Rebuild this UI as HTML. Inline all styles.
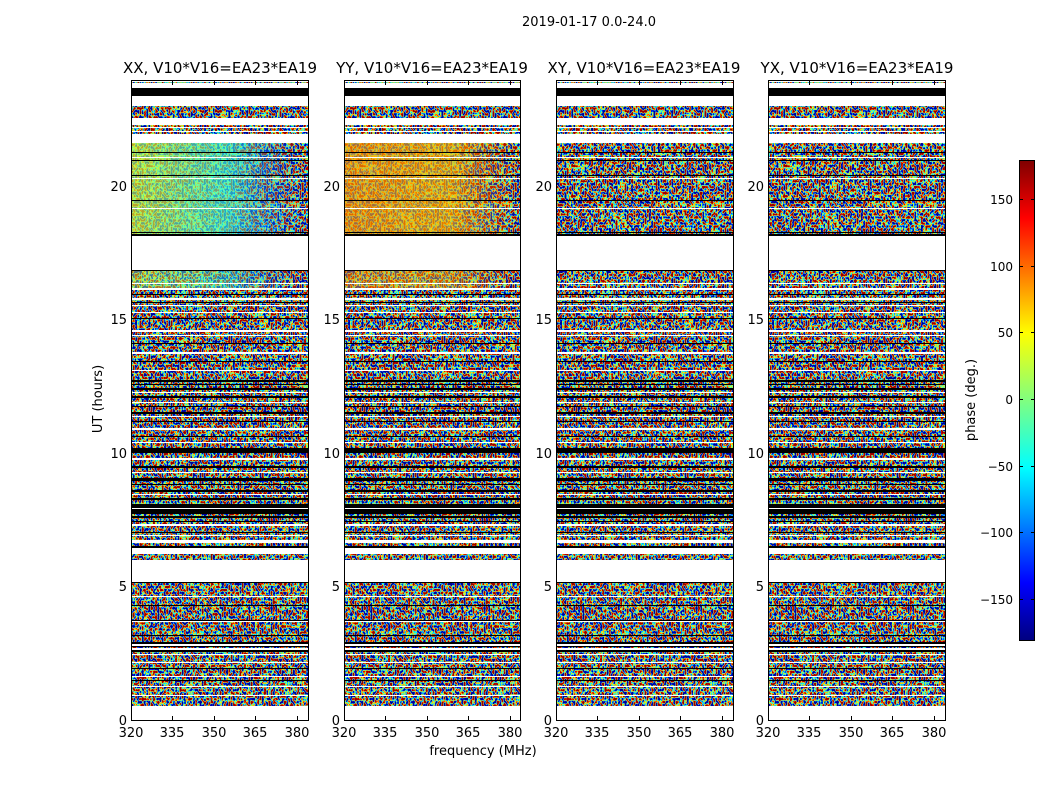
<!DOCTYPE html>
<html><head><meta charset="utf-8"><style>
html,body{margin:0;padding:0;background:#fff;width:1050px;height:800px;overflow:hidden}
svg text{font-family:"DejaVu Sans","Liberation Sans",sans-serif;fill:#000}
</style></head><body>
<svg width="1050" height="800" viewBox="0 0 1050 800" xmlns="http://www.w3.org/2000/svg">
<defs>
<filter id="nz" x="0" y="0" width="1" height="1" color-interpolation-filters="sRGB">
<feTurbulence type="fractalNoise" baseFrequency="0.45 0.33" numOctaves="1" seed="3"/>
<feColorMatrix type="matrix" values="4 0 0 0 -1.5  4 0 0 0 -1.5  4 0 0 0 -1.5  0 0 0 0 1"/>
<feComponentTransfer>
<feFuncR type="table" tableValues="0 0 0 0 0.5 1 1 1 0.6"/>
<feFuncG type="table" tableValues="0 0 0.5 1 1 1 0.5 0 0"/>
<feFuncB type="table" tableValues="0.6 1 1 1 0.5 0 0 0 0"/>
<feFuncA type="linear" slope="0" intercept="1"/>
</feComponentTransfer>
</filter>
<linearGradient id="jet" x1="0" y1="0" x2="0" y2="1">
<stop offset="0" stop-color="#800000"/>
<stop offset="0.12" stop-color="#ff0000"/>
<stop offset="0.36" stop-color="#ffff00"/>
<stop offset="0.5" stop-color="#80ff80"/>
<stop offset="0.64" stop-color="#00ffff"/>
<stop offset="0.88" stop-color="#0000ff"/>
<stop offset="1" stop-color="#00007f"/>
</linearGradient>
<linearGradient id="tintA" x1="0" y1="0" x2="1" y2="0">
<stop offset="0" stop-color="#c8ff40"/>
<stop offset="0.55" stop-color="#40ffd0"/>
<stop offset="1" stop-color="#2060ff" stop-opacity="0"/>
</linearGradient>
<linearGradient id="tintB" x1="0" y1="0" x2="1" y2="0">
<stop offset="0" stop-color="#ffa000"/>
<stop offset="0.6" stop-color="#ffc000"/>
<stop offset="1" stop-color="#ff8000" stop-opacity="0"/>
</linearGradient>
<g id="stripes">
<rect x="0" y="0" width="177" height="2" fill="#fff"/>
<rect x="0" y="3" width="177" height="6" fill="#fff"/>
<rect x="0" y="8" width="177" height="8" fill="#000"/>
<rect x="0" y="16" width="177" height="10" fill="#fff"/>
<rect x="0" y="38" width="177" height="7" fill="#fff"/>
<rect x="0" y="47" width="177" height="1" fill="#fff"/>
<rect x="0" y="51" width="177" height="1" fill="#fff"/>
<rect x="0" y="54" width="177" height="9" fill="#fff"/>
<rect x="0" y="72" width="177" height="1" fill="#000"/>
<rect x="0" y="77" width="177" height="1" fill="#fff"/>
<rect x="0" y="80" width="177" height="1" fill="#000"/>
<rect x="0" y="95" width="177" height="1" fill="#000"/>
<rect x="0" y="98" width="177" height="1" fill="#fff"/>
<rect x="0" y="120" width="177" height="1" fill="#000"/>
<rect x="0" y="128" width="177" height="1" fill="#fff"/>
<rect x="0" y="152" width="177" height="1" fill="#000"/>
<rect x="0" y="154" width="177" height="2" fill="#000"/>
<rect x="0" y="156" width="177" height="34" fill="#fff"/>
<rect x="0" y="190" width="177" height="1" fill="#000"/>
<rect x="0" y="203" width="177" height="1" fill="#fff"/>
<rect x="0" y="208" width="177" height="2" fill="#fff"/>
<rect x="0" y="214" width="177" height="1" fill="#000"/>
<rect x="0" y="218" width="177" height="2" fill="#fff"/>
<rect x="0" y="222" width="177" height="1" fill="#000"/>
<rect x="0" y="225" width="177" height="1" fill="#fff"/>
<rect x="0" y="232" width="177" height="1" fill="#fff"/>
<rect x="0" y="238" width="177" height="1" fill="#000"/>
<rect x="0" y="250" width="177" height="2" fill="#fff"/>
<rect x="0" y="255" width="177" height="1" fill="#fff"/>
<rect x="0" y="263" width="177" height="1" fill="#000"/>
<rect x="0" y="272" width="177" height="2" fill="#fff"/>
<rect x="0" y="281" width="177" height="1" fill="#000"/>
<rect x="0" y="290" width="177" height="1" fill="#fff"/>
<rect x="0" y="300" width="177" height="2" fill="#000"/>
<rect x="0" y="304" width="177" height="1" fill="#000"/>
<rect x="0" y="308" width="177" height="2" fill="#000"/>
<rect x="0" y="312" width="177" height="1" fill="#fff"/>
<rect x="0" y="316" width="177" height="2" fill="#000"/>
<rect x="0" y="322" width="177" height="1" fill="#fff"/>
<rect x="0" y="326" width="177" height="1" fill="#000"/>
<rect x="0" y="332" width="177" height="2" fill="#000"/>
<rect x="0" y="336" width="177" height="1" fill="#fff"/>
<rect x="0" y="341" width="177" height="1" fill="#000"/>
<rect x="0" y="348" width="177" height="2" fill="#fff"/>
<rect x="0" y="356" width="177" height="1" fill="#000"/>
<rect x="0" y="362" width="177" height="1" fill="#fff"/>
<rect x="0" y="368" width="177" height="5" fill="#000"/>
<rect x="0" y="378" width="177" height="2" fill="#fff"/>
<rect x="0" y="386" width="177" height="2" fill="#000"/>
<rect x="0" y="392" width="177" height="1" fill="#fff"/>
<rect x="0" y="398" width="177" height="3" fill="#000"/>
<rect x="0" y="404" width="177" height="1" fill="#000"/>
<rect x="0" y="410" width="177" height="2" fill="#000"/>
<rect x="0" y="414" width="177" height="1" fill="#fff"/>
<rect x="0" y="418" width="177" height="2" fill="#000"/>
<rect x="0" y="424" width="177" height="10" fill="#000"/>
<rect x="0" y="428" width="177" height="1" fill="#fff"/>
<rect x="0" y="436" width="177" height="2" fill="#000"/>
<rect x="0" y="441" width="177" height="1" fill="#000"/>
<rect x="0" y="444" width="177" height="2" fill="#fff"/>
<rect x="0" y="452" width="177" height="1" fill="#000"/>
<rect x="0" y="455" width="177" height="1" fill="#fff"/>
<rect x="0" y="460" width="177" height="3" fill="#fff"/>
<rect x="0" y="466" width="177" height="2" fill="#000"/>
<rect x="0" y="468" width="177" height="6" fill="#fff"/>
<rect x="0" y="480" width="177" height="22" fill="#fff"/>
<rect x="0" y="502" width="177" height="1" fill="#000"/>
<rect x="0" y="516" width="177" height="1" fill="#fff"/>
<rect x="0" y="525" width="177" height="1" fill="#000"/>
<rect x="0" y="540" width="177" height="1" fill="#000"/>
<rect x="0" y="541" width="177" height="1" fill="#fff"/>
<rect x="0" y="555" width="177" height="1" fill="#000"/>
<rect x="0" y="562" width="177" height="2" fill="#000"/>
<rect x="0" y="564" width="177" height="2" fill="#fff"/>
<rect x="0" y="566" width="177" height="1" fill="#000"/>
<rect x="0" y="568" width="177" height="2" fill="#fff"/>
<rect x="0" y="570" width="177" height="2" fill="#000"/>
<rect x="0" y="574" width="177" height="1" fill="#fff"/>
<rect x="0" y="582" width="177" height="1" fill="#fff"/>
<rect x="0" y="588" width="177" height="1" fill="#000"/>
<rect x="0" y="596" width="177" height="1" fill="#fff"/>
<rect x="0" y="600" width="177" height="1" fill="#000"/>
<rect x="0" y="606" width="177" height="1" fill="#fff"/>
<rect x="0" y="615" width="177" height="1" fill="#fff"/>
<rect x="0" y="626" width="177" height="14" fill="#fff"/>
</g>
</defs>

<text x="589" y="26" font-size="13" text-anchor="middle">2019-01-17 0.0-24.0</text>

<g transform="translate(131,80)">
<svg x="0" y="0" width="177" height="640"><rect x="0" y="0" width="177" height="640" filter="url(#nz)"/>
<rect x="0" y="63" width="177" height="93" fill="url(#tintA)" opacity="0.65"/>
<rect x="0" y="190" width="177" height="18" fill="url(#tintA)" opacity="0.45"/>
<use href="#stripes"/></svg>
</g>
<g transform="translate(344,80)">
<svg x="0" y="0" width="176" height="640"><rect x="0" y="0" width="177" height="640" filter="url(#nz)"/>
<rect x="0" y="63" width="177" height="93" fill="url(#tintB)" opacity="0.65"/>
<rect x="0" y="190" width="177" height="18" fill="url(#tintB)" opacity="0.45"/>
<use href="#stripes"/></svg>
</g>
<g transform="translate(556,80)">
<svg x="0" y="0" width="177" height="640"><rect x="0" y="0" width="177" height="640" filter="url(#nz)"/>
<use href="#stripes"/></svg>
</g>
<g transform="translate(768,80)">
<svg x="0" y="0" width="177" height="640"><rect x="0" y="0" width="177" height="640" filter="url(#nz)"/>
<use href="#stripes"/></svg>
</g>

<g fill="none" stroke="#000" stroke-width="1">
<rect x="131.5" y="80.5" width="177" height="640"/>
<rect x="344.5" y="80.5" width="176" height="640"/>
<rect x="556.5" y="80.5" width="177" height="640"/>
<rect x="768.5" y="80.5" width="177" height="640"/>
</g>
<g stroke="#000" stroke-width="1">
<path d="M172.5 720v-4M214.5 720v-4M255.5 720v-4M297.5 720v-4M172.5 81v4M214.5 81v4M255.5 81v4M297.5 81v4"/>
<path d="M385.5 720v-4M427.5 720v-4M468.5 720v-4M510.5 720v-4M385.5 81v4M427.5 81v4M468.5 81v4M510.5 81v4"/>
<path d="M597.5 720v-4M639.5 720v-4M680.5 720v-4M722.5 720v-4M597.5 81v4M639.5 81v4M680.5 81v4M722.5 81v4"/>
<path d="M809.5 720v-4M851.5 720v-4M892.5 720v-4M934.5 720v-4M809.5 81v4M851.5 81v4M892.5 81v4M934.5 81v4"/>
</g>
<g font-size="13" text-anchor="middle">
<text x="220" y="73" font-size="15">XX, V10*V16=EA23*EA19</text>
<text x="432" y="73" font-size="15">YY, V10*V16=EA23*EA19</text>
<text x="644" y="73" font-size="15">XY, V10*V16=EA23*EA19</text>
<text x="857" y="73" font-size="15">YX, V10*V16=EA23*EA19</text>
<text x="131" y="737">320</text><text x="172" y="737">335</text><text x="214" y="737">350</text><text x="255" y="737">365</text><text x="297" y="737">380</text>
<text x="344" y="737">320</text><text x="385" y="737">335</text><text x="427" y="737">350</text><text x="468" y="737">365</text><text x="510" y="737">380</text>
<text x="556" y="737">320</text><text x="597" y="737">335</text><text x="639" y="737">350</text><text x="680" y="737">365</text><text x="722" y="737">380</text>
<text x="768" y="737">320</text><text x="809" y="737">335</text><text x="851" y="737">350</text><text x="892" y="737">365</text><text x="934" y="737">380</text>
<text x="483" y="755">frequency (MHz)</text>
</g>
<g font-size="13" text-anchor="end">
<text x="127" y="725">0</text><text x="127" y="591">5</text><text x="127" y="458">10</text><text x="127" y="324">15</text><text x="127" y="191">20</text>
<text x="340" y="725">0</text><text x="340" y="591">5</text><text x="340" y="458">10</text><text x="340" y="324">15</text><text x="340" y="191">20</text>
<text x="552" y="725">0</text><text x="552" y="591">5</text><text x="552" y="458">10</text><text x="552" y="324">15</text><text x="552" y="191">20</text>
<text x="764" y="725">0</text><text x="764" y="591">5</text><text x="764" y="458">10</text><text x="764" y="324">15</text><text x="764" y="191">20</text>
</g>
<text x="0" y="0" font-size="13" text-anchor="middle" transform="translate(102,399) rotate(-90)">UT (hours)</text>

<rect x="1019.5" y="160.5" width="15" height="480" fill="url(#jet)" stroke="#000"/>
<g stroke="#000"><path d="M1019 199.5h4M1031 199.5h4M1019 266.5h4M1031 266.5h4M1019 332.5h4M1031 332.5h4M1019 399.5h4M1031 399.5h4M1019 466.5h4M1031 466.5h4M1019 532.5h4M1031 532.5h4M1019 599.5h4M1031 599.5h4"/></g>
<g font-size="12" text-anchor="end">
<text x="1013" y="204">150</text><text x="1013" y="271">100</text><text x="1013" y="337">50</text><text x="1013" y="404">0</text>
<text x="1013" y="471">−50</text><text x="1013" y="537">−100</text><text x="1013" y="604">−150</text>
</g>
<text x="0" y="0" font-size="13" text-anchor="middle" transform="translate(975,400) rotate(-90)">phase (deg.)</text>
</svg>
</body></html>
